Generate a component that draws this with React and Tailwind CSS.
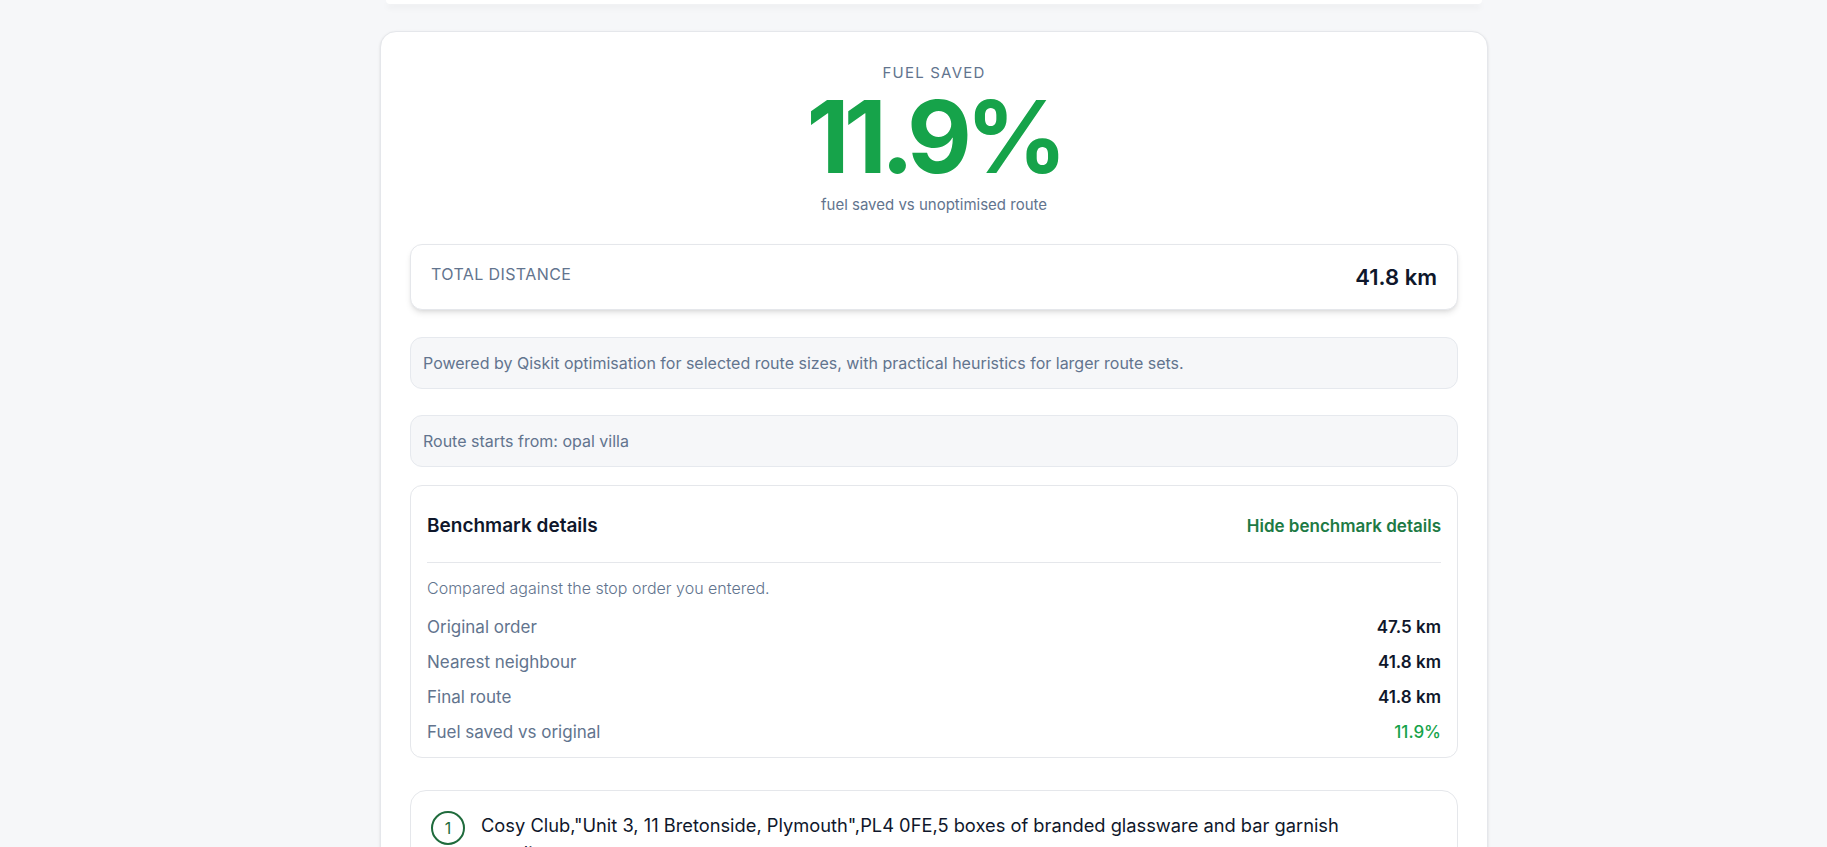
const benchmarkRows = [
  { label: "Original order", value: "47.5 km" },
  { label: "Nearest neighbour", value: "41.8 km" },
  { label: "Final route", value: "41.8 km" },
  { label: "Fuel saved vs original", value: "11.9%", good: true },
];

function InfoNote({ children, className = "" }) {
  return (
    <div
      className={`rounded-xl border border-[#e6e9ee] bg-[#f6f7f9] px-3 py-[15px] text-base leading-5 text-slate-500 ${className}`}
    >
      {children}
    </div>
  );
}

export default function App() {
  return (
    <div
      className="min-h-screen bg-[#f6f7f9] pl-[380px] pr-[339px]"
      style={{ fontFamily: "Inter, 'Noto Sans', sans-serif" }}
    >
      {/* bottom of the panel above */}
      <div className="mx-[6px] h-1 rounded-b-2xl bg-white shadow-md" />

      <section className="mt-[27px] rounded-2xl border border-gray-200 bg-white px-[29px] pt-[31px] pb-10 shadow-sm">
        <div className="flex flex-col items-center text-center">
          <p className="text-[15px] leading-5 tracking-[0.08em] text-slate-500 uppercase">
            Fuel saved
          </p>
          <p className="mt-1 text-[100px] leading-[100px] font-bold tracking-[-0.06em] text-[#16a34a]">
            11.9%
          </p>
          <p className="mt-2 text-[15px] leading-5 text-slate-500">
            fuel saved vs unoptimised route
          </p>
        </div>

        <div className="mt-[29px] flex items-start justify-between rounded-xl border border-gray-200 bg-white px-5 py-[18px] shadow-md">
          <span className="mt-[1px] text-base leading-5 tracking-wide text-slate-500 uppercase">
            Total distance
          </span>
          <span className="text-[22px] leading-7 font-semibold text-slate-900">
            41.8 km
          </span>
        </div>

        <InfoNote className="mt-[27px]">
          Powered by Qiskit optimisation for selected route sizes, with
          practical heuristics for larger route sets.
        </InfoNote>

        <InfoNote className="mt-[26px]">Route starts from: opal villa</InfoNote>

        <div className="mt-[18px] rounded-xl border border-gray-200 bg-white px-4 pb-[13px]">
          <div className="flex items-center justify-between border-b border-gray-200 pt-[26px] pb-[22px]">
            <h3 className="text-[19px] leading-7 font-semibold text-slate-900">
              Benchmark details
            </h3>
            <button className="text-[17px] leading-6 font-semibold text-[#1d7a44]">
              Hide benchmark details
            </button>
          </div>

          <p className="mt-[15px] text-base leading-5 font-light text-slate-500">
            Compared against the stop order you entered.
          </p>

          <div className="mt-[17px] flex flex-col gap-[11px]">
            {benchmarkRows.map((row) => (
              <div
                key={row.label}
                className="flex items-center justify-between text-[17px] leading-6"
              >
                <span className="text-slate-500">{row.label}</span>
                <span
                  className={
                    row.good
                      ? "font-medium text-[#16a34a]"
                      : "font-semibold text-slate-900"
                  }
                >
                  {row.value}
                </span>
              </div>
            ))}
          </div>
        </div>

        <ol className="mt-8 flex flex-col gap-4">
          <li className="flex items-start gap-4 rounded-2xl border border-gray-200 bg-white p-5">
            <span className="flex h-[34px] w-[34px] shrink-0 items-center justify-center rounded-full border-2 border-[#1f6b3c] text-base text-[#1f6b3c]">
              1
            </span>
            <p className="pr-20 text-[18.3px] leading-7 text-slate-900">
              Cosy Club,"Unit 3, 11 Bretonside, Plymouth",PL4 0FE,5 boxes of
              branded glassware and bar garnish supplies
            </p>
          </li>
        </ol>
      </section>
    </div>
  );
}
